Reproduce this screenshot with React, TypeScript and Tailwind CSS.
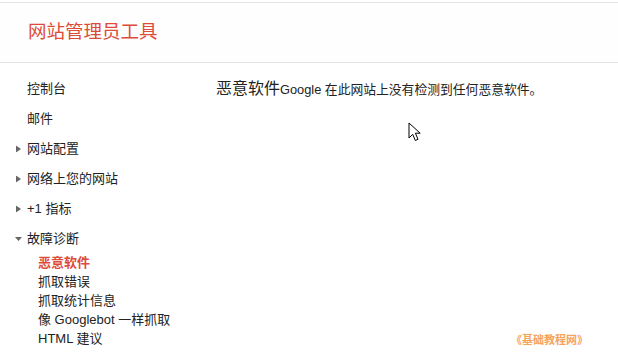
import React from "react";

const font = { fontFamily: '"Liberation Sans", Arial, "Noto Sans CJK SC", sans-serif' };

function RightTri() {
  return (
    <svg width="5" height="7" viewBox="0 0 5 7" className="absolute left-[16px] top-1/2 -translate-y-1/2">
      <path d="M0 0 L5 3.5 L0 7 Z" fill="#666" />
    </svg>
  );
}
function DownTri() {
  return (
    <svg width="7" height="4" viewBox="0 0 7 4" className="absolute left-[15px] top-1/2 -translate-y-1/2">
      <path d="M0 0 L7 0 L3.5 4 Z" fill="#666" />
    </svg>
  );
}

function NavItem({ label, tri }: { label: string; tri?: "right" | "down" }) {
  return (
    <div className="relative h-[30px] flex items-center pl-[27px] text-[13px] text-[#222]">
      {tri === "right" && <RightTri />}
      {tri === "down" && <DownTri />}
      {label}
    </div>
  );
}

function SubItem({ label, active }: { label: string; active?: boolean }) {
  return (
    <div
      className={
        "h-[19px] flex items-center pl-[38px] text-[13px] " +
        (active ? "text-[#dd4b39] font-bold" : "text-[#222]")
      }
    >
      {label}
    </div>
  );
}

export default function App() {
  return (
    <div className="relative w-[618px] h-[357px] bg-white overflow-hidden" style={font}>
      <div className="mt-[2px] h-[61px] border-t border-b border-[#e5e5e5] bg-[#fdfefd] flex items-center pl-[28px]">
        <span className="text-[18.5px] text-[#dd4b39] leading-none">网站管理员工具</span>
      </div>
      <div className="flex">
        <div className="w-[200px] pt-[11px]">
          <NavItem label="控制台" />
          <NavItem label="邮件" />
          <NavItem label="网站配置" tri="right" />
          <NavItem label="网络上您的网站" tri="right" />
          <NavItem label="+1 指标" tri="right" />
          <div className="relative h-[29px] flex items-center pl-[27px] text-[13px] text-[#222]">
            <DownTri />
            故障诊断
          </div>
          <SubItem label="恶意软件" active />
          <SubItem label="抓取错误" />
          <SubItem label="抓取统计信息" />
          <SubItem label="像 Googlebot 一样抓取" />
          <SubItem label="HTML 建议" />
        </div>
        <div className="pl-[16px] pt-[14px]">
          <div className="flex items-baseline h-[18px] text-[#222]">
            <span className="text-[16px]">恶意软件</span>
            <span className="text-[12.8px]">Google 在此网站上没有检测到任何恶意软件。</span>
          </div>
        </div>
      </div>
      <svg
        className="absolute left-[408px] top-[122px]"
        width="14"
        height="21"
        viewBox="0 0 14 21"
      >
        <path
          d="M1 1 L1 16 L4.7 12.3 L7.3 18.5 L10 17.3 L7.4 11.2 L12.2 11.2 Z"
          fill="white"
          stroke="black"
          strokeWidth="1"
          strokeLinejoin="miter"
        />
      </svg>
      <div className="absolute left-[511px] top-[332px] text-[11px] leading-[16px] font-bold text-[#f7a35c]">
        《基础教程网》
      </div>
    </div>
  );
}
